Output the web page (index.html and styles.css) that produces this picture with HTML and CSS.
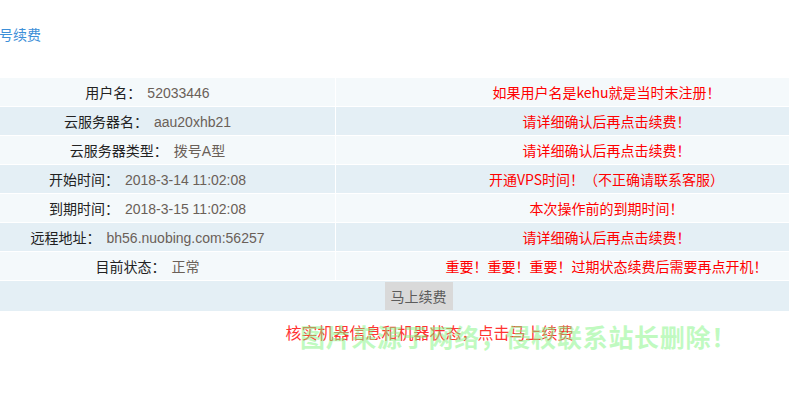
FILE: index.html
```html
<!DOCTYPE html>
<html lang="zh-CN">
<head>
<meta charset="utf-8">
<title>拨号续费</title>
<link rel="stylesheet" href="styles.css">
</head>
<body>
<div class="page">
  <div class="title">拨号续费</div>
  <table class="info">
    <tr class="odd">
      <td class="lbl">用户名：<span class="val">52033446</span></td>
      <td class="tip">如果用户名是kehu就是当时末注册！</td>
    </tr>
    <tr class="even">
      <td class="lbl">云服务器名：<span class="val">aau20xhb21</span></td>
      <td class="tip">请详细确认后再点击续费！</td>
    </tr>
    <tr class="odd">
      <td class="lbl">云服务器类型：<span class="val">拨号A型</span></td>
      <td class="tip">请详细确认后再点击续费！</td>
    </tr>
    <tr class="even">
      <td class="lbl">开始时间：<span class="val">2018-3-14 11:02:08</span></td>
      <td class="tip">开通VPS时间！（不正确请联系客服）</td>
    </tr>
    <tr class="odd">
      <td class="lbl">到期时间：<span class="val">2018-3-15 11:02:08</span></td>
      <td class="tip">本次操作前的到期时间！</td>
    </tr>
    <tr class="even">
      <td class="lbl">远程地址：<span class="val">bh56.nuobing.com:56257</span></td>
      <td class="tip">请详细确认后再点击续费！</td>
    </tr>
    <tr class="odd">
      <td class="lbl">目前状态：<span class="val">正常</span></td>
      <td class="tip">重要！重要！重要！过期状态续费后需要再点开机！</td>
    </tr>
    <tr class="even btnrow">
      <td colspan="2"><button class="btn" type="button">马上续费</button></td>
    </tr>
  </table>
  <p class="note">核实机器信息和机器状态，点击马上续费</p>
  <div class="watermark">图片来源于网络，侵权联系站长删除！</div>
</div>
</body>
</html>
```
FILE: styles.css
```css
html, body {
  margin: 0;
  padding: 0;
  background: #ffffff;
}
body {
  font-family: "Microsoft YaHei", "Noto Sans CJK SC", "Liberation Sans", sans-serif;
  font-size: 14px;
  color: #222;
  width: 789px;
  height: 402px;
  overflow: hidden;
}
.page {
  position: relative;
  margin-left: -41px;
  width: 919px;
}
.title {
  margin-left: 26px;
  padding-top: 24px;
  height: 78px;
  box-sizing: border-box;
  line-height: 20px;
  color: #3d8fd8;
  font-size: 14px;
}
.info {
  width: 919px;
  border-collapse: separate;
  border-spacing: 1px;
  margin: -1px 0 0 0;
}
.info td {
  height: 28px;
  padding: 0;
  text-align: center;
  vertical-align: middle;
  line-height: 20px;
}
.info td.lbl {
  width: 375px;
  color: #222;
}
.info .val {
  font-family: "Liberation Sans", "Noto Sans CJK SC", sans-serif;
  color: #6a6058;
  margin-left: 6px;
}
.info td.tip {
  color: #ff0000;
}
.odd td {
  background: #f4f9fb;
}
.even td {
  background: #e4eff5;
}
.btnrow td {
  height: 30px;
}
.btn {
  display: inline-block;
  height: 28px;
  width: 68px;
  border: none;
  margin: 0;
  padding: 0;
  background: #d9d9d9;
  color: #5c5c5c;
  font-family: "Microsoft YaHei", "Noto Sans CJK SC", sans-serif;
  font-size: 14px;
  vertical-align: middle;
}
.note {
  margin: 9px 0 0 0;
  padding-left: 22px;
  text-align: center;
  color: #ff3333;
  font-size: 16px;
  line-height: 22px;
}
.watermark {
  position: absolute;
  left: 341px;
  top: 320px;
  font-size: 25px;
  font-weight: bold;
  letter-spacing: 0.7px;
  line-height: 32px;
  color: rgba(130, 245, 130, 0.5);
  white-space: nowrap;
}
```
